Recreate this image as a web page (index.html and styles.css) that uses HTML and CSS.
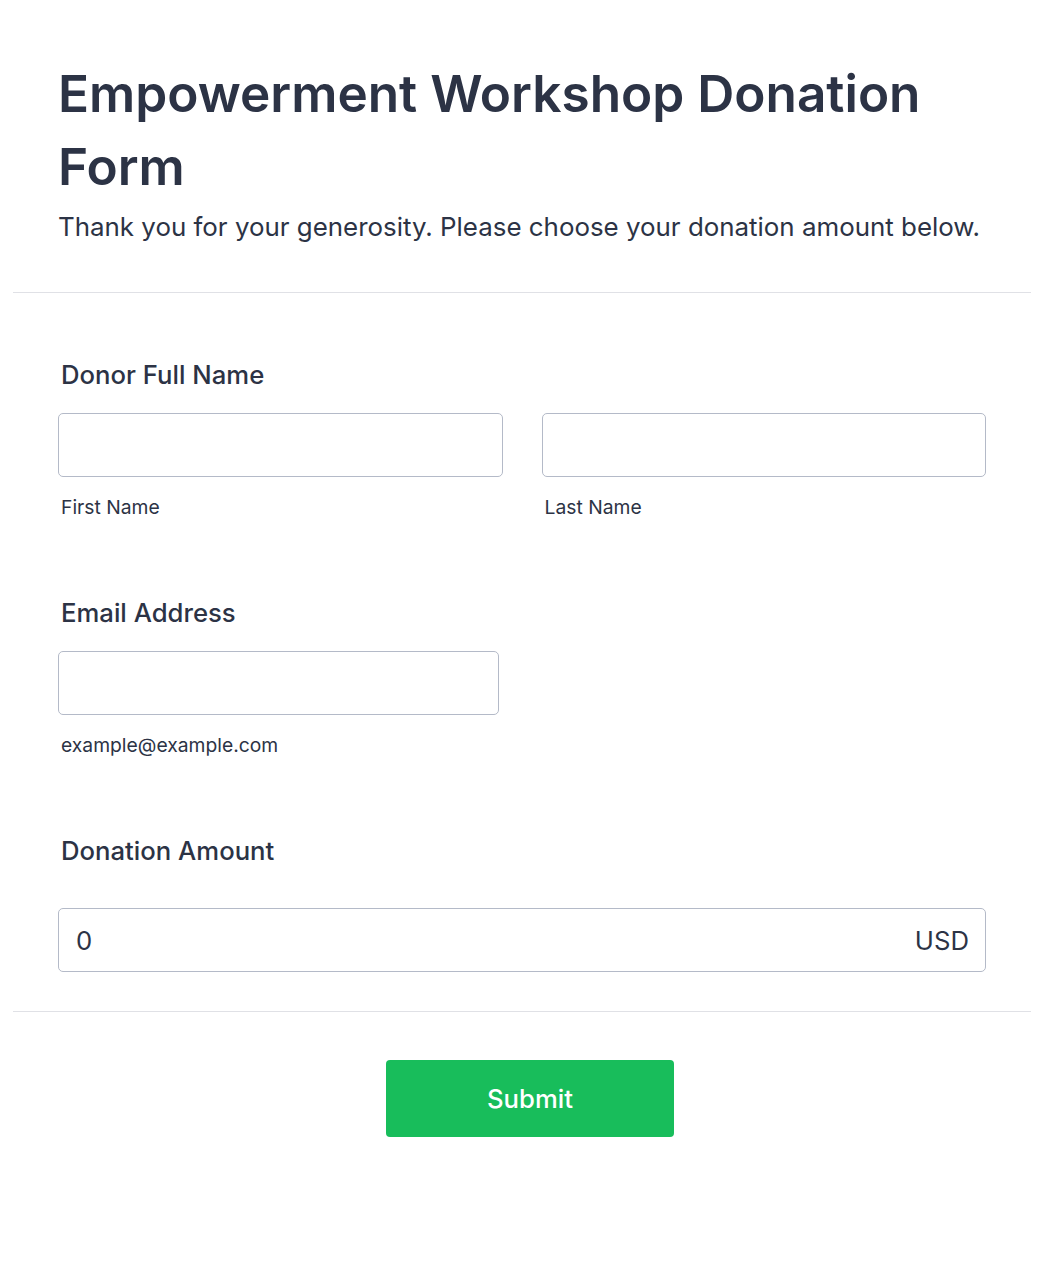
FILE: index.html
```html
<!DOCTYPE html>
<html lang="en">
<head>
<meta charset="utf-8">
<title>Empowerment Workshop Donation Form</title>
<link rel="stylesheet" href="styles.css">
</head>
<body>
<div class="page">
  <header class="header">
    <h1 class="title">Empowerment Workshop Donation Form</h1>
    <p class="subtitle">Thank you for your generosity. Please choose your donation amount below.</p>
  </header>
  <form class="form">
    <div class="field">
      <label class="label">Donor Full Name</label>
      <div class="name-row">
        <div class="sub">
          <input class="input" type="text">
          <span class="hint">First Name</span>
        </div>
        <div class="sub">
          <input class="input" type="text">
          <span class="hint">Last Name</span>
        </div>
      </div>
    </div>
    <div class="field">
      <label class="label">Email Address</label>
      <div class="sub email">
        <input class="input" type="email">
        <span class="hint">example@example.com</span>
      </div>
    </div>
    <div class="field last">
      <label class="label">Donation Amount</label>
      <div class="amount">
        <span class="amount-value">0</span>
        <span class="amount-cur">USD</span>
      </div>
    </div>
  </form>
  <div class="actions">
    <button class="submit" type="button">Submit</button>
  </div>
</div>
</body>
</html>
```

FILE: styles.css
```css
* { box-sizing: border-box; }
html, body { margin: 0; padding: 0; background: #fff; }
body {
  font-family: Inter, "Noto Sans", "Liberation Sans", sans-serif;
  color: #2c3345;
}
.page {
  padding: 0 13px;
}
.header {
  padding: 57px 45px 41px;
  border-bottom: 1px solid #e0e1e6;
}
.title {
  margin: 0;
  font-size: 51.3px;
  line-height: 73px;
  font-weight: 600;
}
.subtitle {
  margin: 0;
  font-size: 25.9px;
  line-height: 48px;
  font-weight: 400;
}
.form {
  padding: 64px 45px 0;
  border-bottom: 1px solid #e0e1e6;
}
.field {
  display: flex;
  flex-direction: column;
  padding-bottom: 76px;
}
.field.last { padding-bottom: 39px; }
.label {
  font-size: 25.7px;
  line-height: 36px;
  font-weight: 500;
  padding-left: 3px;
  margin-bottom: 20px;
}
.name-row {
  display: grid;
  grid-template-columns: 1fr 1fr;
  gap: 39px;
}
.sub {
  display: flex;
  flex-direction: column;
}
.sub.email { width: 441px; }
.input {
  height: 64px;
  width: 100%;
  border: 1px solid #b4bac8;
  border-radius: 5px;
  background: #fff;
  font: inherit;
}
.hint {
  font-size: 19.3px;
  line-height: 24px;
  padding-left: 3px;
  margin-top: 18px;
}
.amount {
  height: 64px;
  margin-top: 19px;
  border: 1px solid #b4bac8;
  border-radius: 5px;
  display: flex;
  align-items: center;
  justify-content: space-between;
  padding: 0 16px 0 17px;
  font-size: 25.7px;
}
.actions {
  display: flex;
  justify-content: center;
  padding-top: 48px;
}
.submit {
  width: 288px;
  height: 77px;
  background: #18bd5b;
  color: #fff;
  border: none;
  border-radius: 4px;
  font-family: inherit;
  font-size: 25.7px;
  font-weight: 500;
  margin-left: 16px;
}
```
